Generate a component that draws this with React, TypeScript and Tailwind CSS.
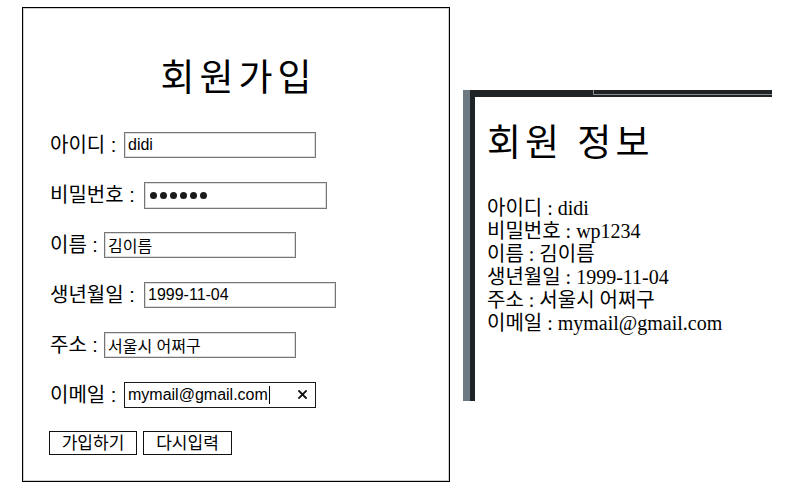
import React from "react";

const sans = "font-['Liberation_Sans','Noto_Sans_CJK_KR',sans-serif]";

function Label({ text, w }: { text: string; w: string }) {
  return <span className={`${w} shrink-0 whitespace-pre text-[20px] leading-none text-black`}>{text}</span>;
}

function Field({ label, lw, value }: { label: string; lw: string; value: string }) {
  return (
    <div className="flex h-[50px] items-center">
      <Label text={label} w={lw} />
      <input
        readOnly
        value={value}
        className={`w-[192px] h-[26px] border border-[#767676] bg-white px-[3px] text-[16px] text-black outline-none shadow-[inset_0_0_0_1px_#dcdcdc] ${sans}`}
      />
    </div>
  );
}

export default function App() {
  return (
    <div className={`flex items-start bg-white w-[796px] h-[493px] overflow-hidden ${sans}`}>
      {/* 회원가입 form */}
      <div className="ml-[22px] mt-[7px] w-[428px] h-[475px] border border-black shadow-[inset_0_0_0_1px_#cfcfcf] bg-white pl-[27px]">
        <h1 className="pt-[53px] mb-[23px] pr-[22px] text-center text-[37px] leading-[36px] tracking-[5px] font-normal text-black">
          회원가입
        </h1>
        <Field label="아이디 : " lw="w-[74px]" value="didi" />
        <div className="flex h-[50px] items-center">
          <Label text="비밀번호 : " w="w-[94px]" />
          <div className="flex w-[183px] h-[27px] items-center gap-[3px] border border-[#767676] bg-white pl-[5px] shadow-[inset_0_0_0_1px_#dcdcdc]">
            {[0, 1, 2, 3, 4, 5].map((i) => (
              <span key={i} className="block w-[7px] h-[7px] rounded-full bg-[#1a1a1a]" />
            ))}
          </div>
        </div>
        <Field label="이름 : " lw="w-[54px]" value="김이름" />
        <Field label="생년월일 : " lw="w-[94px]" value="1999-11-04" />
        <Field label="주소 : " lw="w-[54px]" value="서울시 어쩌구" />
        <div className="flex h-[50px] items-center">
          <Label text="이메일 : " w="w-[74px]" />
          <div className="relative flex w-[192px] h-[26px] items-center border-[1.5px] border-[#1a1a1a] bg-white pl-[3px] text-[16px] text-black">
            <span>mymail@gmail.com</span>
            <span className="ml-px block w-px h-[18px] bg-black" />
            <svg className="absolute right-[8px] top-[7px]" width="9" height="9" viewBox="0 0 9 9">
              <path d="M1 1 L8 8 M8 1 L1 8" stroke="#111" strokeWidth="1.8" strokeLinecap="square" />
            </svg>
          </div>
        </div>
        <div className="mt-[11px] flex gap-[6px] -ml-px">
          <button className="w-[88px] h-[24px] border-[1.5px] border-[#111] bg-white text-[17px] leading-none text-black">가입하기</button>
          <button className="w-[89px] h-[24px] border-[1.5px] border-[#111] bg-white text-[17px] leading-none text-black">다시입력</button>
        </div>
      </div>

      {/* 회원 정보 frame */}
      <div className="ml-[13px] mt-[90px] flex w-[309px] h-[311px]">
        <div className="w-[7px] h-full bg-[#6d7a84]" />
        <div className="flex flex-1 flex-col">
          <div className="relative h-[7px] bg-[#1f2326]">
            <div className="absolute left-[123px] right-0 top-[4px] h-px bg-[#8a8d90]" />
            <div className="absolute left-[123px] top-0 h-[5px] w-px bg-[#8a8d90]" />
          </div>
          <div className="flex flex-1">
            <div className="w-[5px] h-full bg-[#1f2326]" />
            <div className="flex-1 pl-[12px] font-['Liberation_Serif','Noto_Sans_CJK_KR',serif] text-black">
              <h2 className={`mt-[27px] text-[37px] leading-[40px] tracking-[4px] font-normal ${sans}`}>회원 정보</h2>
              <div className="mt-[33px] text-[20px] leading-[23px]">
                <div>아이디 : didi</div>
                <div>비밀번호 : wp1234</div>
                <div>이름 : 김이름</div>
                <div>생년월일 : 1999-11-04</div>
                <div>주소 : 서울시 어쩌구</div>
                <div>이메일 : mymail@gmail.com</div>
              </div>
            </div>
          </div>
        </div>
      </div>
    </div>
  );
}
